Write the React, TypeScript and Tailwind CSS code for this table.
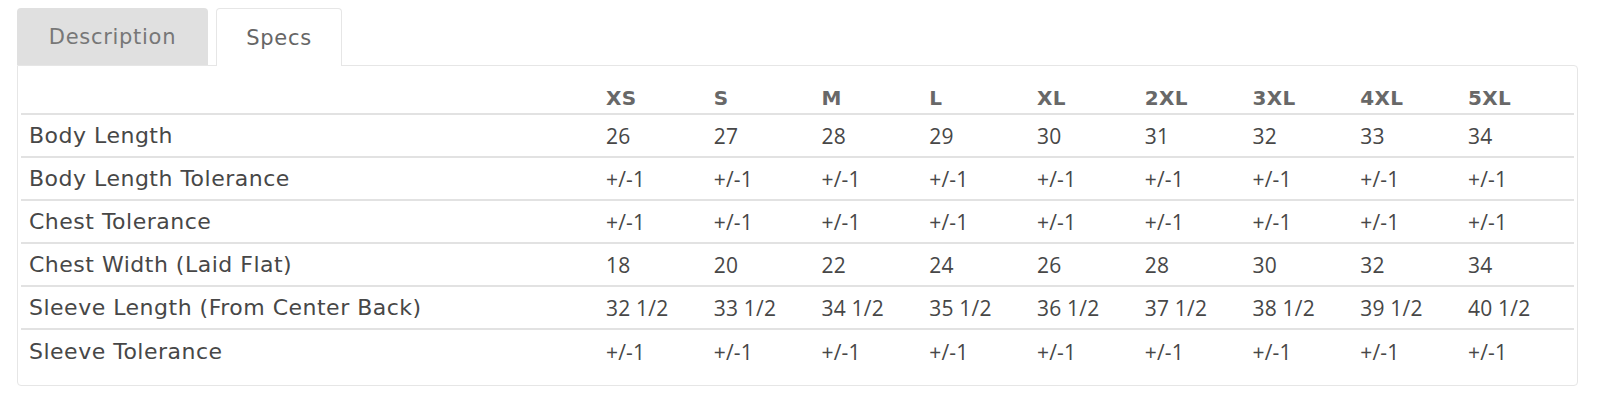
import React from "react";

const sizes = ["XS", "S", "M", "L", "XL", "2XL", "3XL", "4XL", "5XL"];
const pm = Array(9).fill("+/-1");
const rows: [string, string[]][] = [
  ["Body Length", ["26", "27", "28", "29", "30", "31", "32", "33", "34"]],
  ["Body Length Tolerance", pm],
  ["Chest Tolerance", pm],
  ["Chest Width (Laid Flat)", ["18", "20", "22", "24", "26", "28", "30", "32", "34"]],
  [
    "Sleeve Length (From Center Back)",
    ["32 1/2", "33 1/2", "34 1/2", "35 1/2", "36 1/2", "37 1/2", "38 1/2", "39 1/2", "40 1/2"],
  ],
  ["Sleeve Tolerance", pm],
];

export default function App() {
  return (
    <div
      className="bg-white w-[1600px] h-[411px] pt-[8px] pl-[17px] pr-[22px] tracking-[0.5px]"
      style={{ fontFamily: '"DejaVu Sans", "Open Sans", sans-serif' }}
    >
      <div className="flex gap-[8px] items-end">
        <div className="w-[191px] h-[57px] pt-[2px] bg-[#e0e0e0] rounded-t-[4px] flex items-center justify-center text-[21px] tracking-[0.7px] text-[#777777]">
          Description
        </div>
        <div className="w-[126px] h-[58px] pt-[2px] -mb-px relative z-10 bg-white border border-[#e6e6e6] border-b-0 rounded-t-[4px] flex items-center justify-center text-[21px] tracking-[0.7px] text-[#666666]">
          Specs
        </div>
      </div>
      <div className="border border-[#e6e6e6] rounded-b-[4px] rounded-tr-[4px] px-[3px] pb-[13px]">
        <table className="w-full table-fixed border-collapse">
          <colgroup>
            <col className="w-[577px]" />
            {sizes.slice(0, 8).map((s) => (
              <col key={s} className="w-[107.75px]" />
            ))}
            <col />
          </colgroup>
          <thead>
            <tr className="h-[48px] border-b-2 border-[#e2e2e2]">
              <th />
              {sizes.map((s) => (
                <th
                  key={s}
                  className="text-left align-bottom pb-[2px] px-[8px] text-[20px] leading-[26px] tracking-[0.3px] font-bold text-[#686868]"
                >
                  {s}
                </th>
              ))}
            </tr>
          </thead>
          <tbody>
            {rows.map(([label, vals], i) => (
              <tr
                key={label}
                className={
                  "h-[43px] " + (i < rows.length - 1 ? "border-b-2 border-[#e2e2e2]" : "")
                }
              >
                <td className="px-[8px] pt-[1px] text-[22px] leading-[26px] text-[#474747] align-middle whitespace-nowrap">
                  {label}
                </td>
                {vals.map((v, j) => (
                  <td
                    key={j}
                    className="px-[8px] pt-[1px] text-[21px] leading-[26px] tracking-[0.2px] text-[#474747] align-middle whitespace-nowrap font-['Open_Sans',sans-serif]"
                  >
                    {v}
                  </td>
                ))}
              </tr>
            ))}
          </tbody>
        </table>
      </div>
    </div>
  );
}
